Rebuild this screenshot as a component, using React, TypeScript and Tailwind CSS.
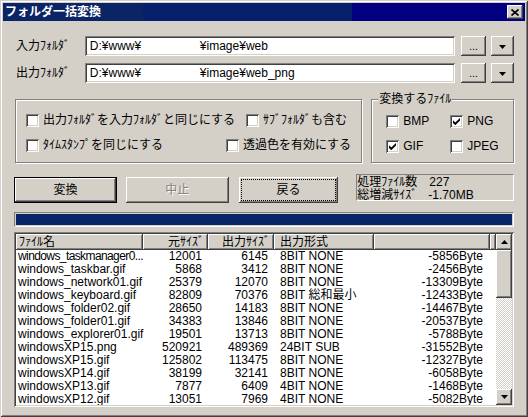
import React from "react";

// ── Win2000 風の立体枠 ──
const raised =
  "shadow-[inset_-1px_-1px_#404040,inset_1px_1px_#ffffff,inset_-2px_-2px_#808080,inset_2px_2px_#d4d0c8]";
const sunken =
  "shadow-[inset_1px_1px_#808080,inset_-1px_-1px_#ffffff,inset_2px_2px_#404040,inset_-2px_-2px_#d4d0c8]";
const etched =
  "border border-[#808080] shadow-[inset_1px_1px_#ffffff,1px_1px_#ffffff]";

interface Row {
  name: string;
  src: string;
  out: string;
  fmt: string;
  diff: string;
}

const ROWS: Row[] = [
  { name: "windows_taskmanager0...", src: "12001", out: "6145", fmt: "8BIT NONE", diff: "-5856Byte" },
  { name: "windows_taskbar.gif", src: "5868", out: "3412", fmt: "8BIT NONE", diff: "-2456Byte" },
  { name: "windows_network01.gif", src: "25379", out: "12070", fmt: "8BIT NONE", diff: "-13309Byte" },
  { name: "windows_keyboard.gif", src: "82809", out: "70376", fmt: "8BIT 総和最小", diff: "-12433Byte" },
  { name: "windows_folder02.gif", src: "28650", out: "14183", fmt: "8BIT NONE", diff: "-14467Byte" },
  { name: "windows_folder01.gif", src: "34383", out: "13846", fmt: "8BIT NONE", diff: "-20537Byte" },
  { name: "windows_explorer01.gif", src: "19501", out: "13713", fmt: "8BIT NONE", diff: "-5788Byte" },
  { name: "windowsXP15.png", src: "520921", out: "489369", fmt: "24BIT SUB", diff: "-31552Byte" },
  { name: "windowsXP15.gif", src: "125802", out: "113475", fmt: "8BIT NONE", diff: "-12327Byte" },
  { name: "windowsXP14.gif", src: "38199", out: "32141", fmt: "8BIT NONE", diff: "-6058Byte" },
  { name: "windowsXP13.gif", src: "7877", out: "6409", fmt: "4BIT NONE", diff: "-1468Byte" },
  { name: "windowsXP12.gif", src: "13051", out: "7969", fmt: "4BIT NONE", diff: "-5082Byte" },
];

function Arrow({ up = false }: { up?: boolean }) {
  return (
    <svg width="7" height="4" viewBox="0 0 7 4">
      <path d={up ? "M3.5 0 L7 4 L0 4 Z" : "M0 0 L7 0 L3.5 4 Z"} fill="#000" />
    </svg>
  );
}

function CheckBox({ checked = false }: { checked?: boolean }) {
  return (
    <span className={`w-[13px] h-[13px] shrink-0 bg-white flex items-center justify-center ${sunken}`}>
      {checked && (
        <svg width="7" height="7" viewBox="0 0 7 7">
          <path d="M0 2.3 L2.3 4.6 L7 0 V2.6 L2.3 7.2 L0 4.9 Z" fill="#000" />
        </svg>
      )}
    </span>
  );
}

function Opt({ label, checked, w }: { label: string; checked?: boolean; w: string }) {
  return (
    <div className={`flex items-center gap-[4px] ${w}`}>
      <CheckBox checked={checked} />
      <span className="leading-[13px] whitespace-nowrap">{label}</span>
    </div>
  );
}

function FolderRow({ label, left, right }: { label: string; left: string; right: string }) {
  return (
    <div className="flex items-center h-[20px]">
      <div className="w-[71px] pl-[2px] whitespace-nowrap">{label}</div>
      <div className={`w-[371px] h-[20px] bg-white flex items-center pl-[5px] whitespace-nowrap ${sunken}`}>
        <span className="inline-block w-[110px]">{left}</span>
        <span>{right}</span>
      </div>
      <div className={`ml-[6px] w-[25px] h-[20px] flex items-end justify-center pb-[4px] leading-none text-[11px] ${raised}`}>
        ...
      </div>
      <div className={`ml-[5px] w-[23px] h-[20px] flex items-center justify-center pt-[1px] ${raised}`}>
        <Arrow />
      </div>
    </div>
  );
}

const COLS = [
  { w: "w-[127px]", head: "ﾌｧｲﾙ名", hcls: "pl-[3px] text-left", ccls: "pl-[2px] text-left" },
  { w: "w-[65px]", head: "元ｻｲｽﾞ", hcls: "pr-[4px] text-right", ccls: "pr-[6px] text-right" },
  { w: "w-[66px]", head: "出力ｻｲｽﾞ", hcls: "pr-[4px] text-right", ccls: "pr-[6px] text-right" },
  { w: "w-[100px]", head: "出力形式", hcls: "pl-[6px] text-left", ccls: "pl-[6px] text-left" },
  { w: "w-[116px]", head: "", hcls: "pr-[4px] text-right", ccls: "pr-[7px] text-right" },
];

export default function App() {
  return (
    <div
      className={`w-[528px] h-[417px] overflow-hidden bg-[#d4d0c8] p-[3px] text-[12px] text-black font-['Liberation_Sans','Noto_Sans_CJK_JP',sans-serif] shadow-[inset_1px_1px_#d4d0c8,inset_-1px_-1px_#404040,inset_2px_2px_#ffffff,inset_-2px_-2px_#808080]`}
    >
      {/* タイトルバー */}
      <div className="h-[18px] flex items-center justify-between pl-[2px] pr-[2px] bg-[linear-gradient(to_right,#0b2466_0px,#0b2466_140px,#07206e_140px,#07206e_349px,#000080_349px)]">
        <span className="text-white font-bold leading-none">フォルダ一括変換</span>
        <div className={`w-[16px] h-[14px] bg-[#d4d0c8] flex items-center justify-center ${raised}`}>
          <svg width="8" height="7" viewBox="0 0 8 7">
            <path d="M0.5 0.5 L7.5 6.5 M7.5 0.5 L0.5 6.5" stroke="#000" strokeWidth="1.7" />
          </svg>
        </div>
      </div>

      <div className="px-[11px]">
        {/* フォルダ入力 */}
        <div className="mt-[15px]">
          <FolderRow label="入力ﾌｫﾙﾀﾞ" left="D:¥www¥" right="¥image¥web" />
        </div>
        <div className="mt-[7px]">
          <FolderRow label="出力ﾌｫﾙﾀﾞ" left="D:¥www¥" right="¥image¥web_png" />
        </div>

        {/* オプション */}
        <div className="mt-[16px] flex">
          <div className={`ml-[1px] w-[348px] h-[64px] pl-[10px] pt-[14px] ${etched}`}>
            <div className="flex items-center">
              <Opt label="出力ﾌｫﾙﾀﾞを入力ﾌｫﾙﾀﾞと同じにする" w="w-[220px]" />
              <Opt label="ｻﾌﾞﾌｫﾙﾀﾞも含む" w="" />
            </div>
            <div className="flex items-center mt-[12px]">
              <Opt label="ﾀｲﾑｽﾀﾝﾌﾟを同じにする" w="w-[200px]" />
              <Opt label="透過色を有効にする" w="" />
            </div>
          </div>
          <div className={`relative ml-[9px] w-[143px] h-[64px] pl-[14px] pt-[15px] ${etched}`}>
            <span className="absolute -top-[7px] left-[6px] px-[1px] bg-[#d4d0c8] leading-[13px]">変換するﾌｧｲﾙ</span>
            <div className="flex items-center">
              <Opt label="BMP" w="w-[64px]" />
              <Opt label="PNG" checked w="" />
            </div>
            <div className="flex items-center mt-[12px]">
              <Opt label="GIF" checked w="w-[64px]" />
              <Opt label="JPEG" w="" />
            </div>
          </div>
        </div>

        {/* ボタン + 処理結果 */}
        <div className="mt-[11px] flex items-start">
          <div className={`mt-[3px] w-[103px] h-[26px] border border-black flex items-center justify-center ${raised}`}>
            変換
          </div>
          <div
            className={`mt-[3px] ml-[9px] w-[103px] h-[26px] flex items-center justify-center text-[#808080] [text-shadow:1px_1px_#ffffff] ${raised}`}
          >
            中止
          </div>
          <div className={`relative mt-[3px] ml-[10px] w-[100px] h-[26px] flex items-center justify-center ${raised}`}>
            <span className="absolute inset-[2px] border border-dotted border-black" />
            戻る
          </div>
          <div className="ml-[18px] w-[158px] h-[27px] border border-t-[#808080] border-l-[#808080] border-r-white border-b-white leading-[12px] pt-[1px]">
            <div className="flex">
              <span className="w-[72px] whitespace-nowrap">処理ﾌｧｲﾙ数</span>
              <span>227</span>
            </div>
            <div className="flex mt-[1px]">
              <span className="w-[71px] whitespace-nowrap">総増減ｻｲｽﾞ</span>
              <span>-1.70MB</span>
            </div>
          </div>
        </div>

        {/* プログレスバー */}
        <div className="mt-[9px] h-[15px] border border-t-[#808080] border-l-[#808080] border-r-white border-b-white p-[1px]">
          <div className="h-full w-full bg-[#0a246a]" />
        </div>

        {/* ファイル一覧 */}
        <div className={`mt-[5px] h-[175px] bg-white p-[2px] flex ${sunken}`}>
          <div className="flex-1 min-w-0 overflow-hidden">
            <div className="flex h-[16px] bg-[#d4d0c8]">
              {COLS.map((c, i) => (
                <div
                  key={i}
                  className={`${c.w} shrink-0 h-full leading-[16px] whitespace-nowrap overflow-hidden ${c.hcls} ${raised}`}
                >
                  {c.head}
                </div>
              ))}
              <div className={`flex-1 h-full ${raised}`} />
            </div>
            {ROWS.map((r, i) => {
              const vals = [r.name, r.src, r.out, r.fmt, r.diff];
              return (
                <div key={i} className="flex h-[13px] leading-[13px]">
                  {COLS.map((c, j) => (
                    <div
                      key={j}
                      className={`${c.w} shrink-0 whitespace-nowrap ${c.ccls} ${
                        j === 0 && r.name.endsWith("...") ? "tracking-[-0.6px]" : ""
                      }`}
                    >
                      {vals[j]}
                    </div>
                  ))}
                </div>
              );
            })}
          </div>

          {/* スクロールバー */}
          <div className="w-[16px] shrink-0 flex flex-col">
            <div className={`h-[16px] bg-[#d4d0c8] flex items-center justify-center ${raised}`}>
              <Arrow up />
            </div>
            <div className={`h-[48px] bg-[#d4d0c8] ${raised}`} />
            <div className="flex-1 bg-[repeating-conic-gradient(#d4d0c8_0%_25%,#ffffff_0%_50%)] bg-[length:2px_2px]" />
            <div className={`h-[16px] bg-[#d4d0c8] flex items-center justify-center ${raised}`}>
              <Arrow />
            </div>
          </div>
        </div>
      </div>
    </div>
  );
}
